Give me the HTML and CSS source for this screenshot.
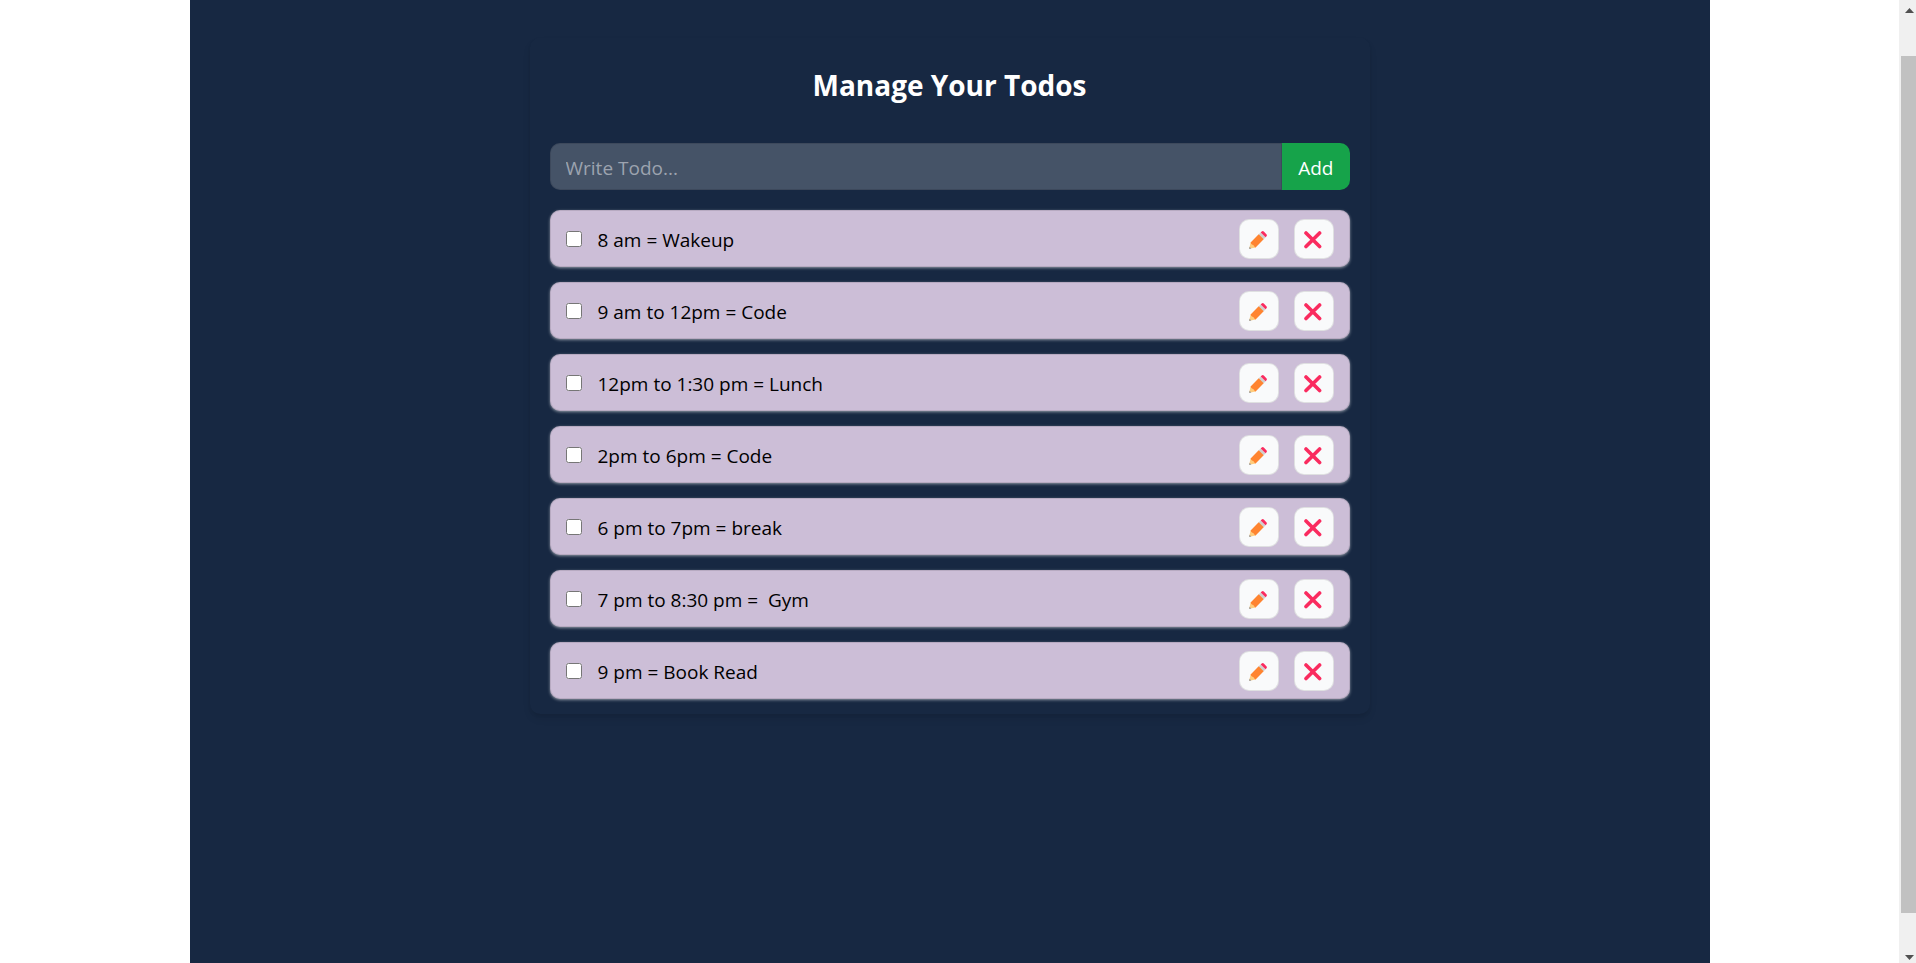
FILE: index.html
```html
<!DOCTYPE html>
<html lang="en">
<head>
<meta charset="utf-8">
<title>Manage Your Todos</title>
<link rel="stylesheet" href="styles.css">
</head>
<body>
<svg class="sprite" aria-hidden="true">
  <symbol id="pencil" viewBox="0 0 18 18">
    <path fill="#ffcc7c" d="M1.6 11.4 0.2 17.8 6.6 16.4 6 12Z"/>
    <path fill="#9b9b9b" d="M0.6 15.8 0.1 17.2Q0.1 17.9 0.8 17.9L2.3 17.4Z"/>
    <path fill="#ff8430" d="M1.6 11.4 9.7 3.3Q10.6 3 11.4 3.7L14.3 6.6Q15 7.4 14.7 8.3L6.6 16.4Q5.8 16.2 5.4 15.4 4.9 14.4 4 14 1.8 13.2 1.6 11.4Z"/>
    <path fill="#d0cfce" d="M9.7 3.3 11.7 1.4 16.6 6.3 14.7 8.3Z"/>
    <path fill="#fa2b5f" d="M11.7 1.4 12.7 0.5Q13.8 -0.3 14.8 0.6L17.4 3.2Q18.3 4.2 17.5 5.3L16.6 6.3Z"/>
  </symbol>
  <symbol id="cross" viewBox="0 0 18 18">
    <path fill="none" stroke="#fa2b5f" stroke-width="3.6" stroke-linecap="round" d="M2 2 15.6 15.6M15.6 2 2 15.6"/>
  </symbol>
</svg>
<div class="window">
  <main class="page">
    <section class="card">
      <h1 class="title">Manage Your Todos</h1>
      <form class="todo-form">
        <input class="todo-input" type="text" placeholder="Write Todo..." aria-label="Write Todo">
        <button class="add" type="button">Add</button>
      </form>
      <ul class="list">
        <li class="item"><input class="check" type="checkbox" id="t1"><label class="text" for="t1">8 am = Wakeup</label><button class="icon-btn" type="button" aria-label="Edit"><svg class="icon"><use href="#pencil"/></svg></button><button class="icon-btn" type="button" aria-label="Delete"><svg class="icon"><use href="#cross"/></svg></button></li>
        <li class="item"><input class="check" type="checkbox" id="t2"><label class="text" for="t2">9 am to 12pm = Code</label><button class="icon-btn" type="button" aria-label="Edit"><svg class="icon"><use href="#pencil"/></svg></button><button class="icon-btn" type="button" aria-label="Delete"><svg class="icon"><use href="#cross"/></svg></button></li>
        <li class="item"><input class="check" type="checkbox" id="t3"><label class="text" for="t3">12pm to 1:30 pm = Lunch</label><button class="icon-btn" type="button" aria-label="Edit"><svg class="icon"><use href="#pencil"/></svg></button><button class="icon-btn" type="button" aria-label="Delete"><svg class="icon"><use href="#cross"/></svg></button></li>
        <li class="item"><input class="check" type="checkbox" id="t4"><label class="text" for="t4">2pm to 6pm = Code</label><button class="icon-btn" type="button" aria-label="Edit"><svg class="icon"><use href="#pencil"/></svg></button><button class="icon-btn" type="button" aria-label="Delete"><svg class="icon"><use href="#cross"/></svg></button></li>
        <li class="item"><input class="check" type="checkbox" id="t5"><label class="text" for="t5">6 pm to 7pm = break</label><button class="icon-btn" type="button" aria-label="Edit"><svg class="icon"><use href="#pencil"/></svg></button><button class="icon-btn" type="button" aria-label="Delete"><svg class="icon"><use href="#cross"/></svg></button></li>
        <li class="item"><input class="check" type="checkbox" id="t6"><label class="text" for="t6">7 pm to 8:30 pm =&nbsp; Gym</label><button class="icon-btn" type="button" aria-label="Edit"><svg class="icon"><use href="#pencil"/></svg></button><button class="icon-btn" type="button" aria-label="Delete"><svg class="icon"><use href="#cross"/></svg></button></li>
        <li class="item"><input class="check" type="checkbox" id="t7"><label class="text" for="t7">9 pm = Book Read</label><button class="icon-btn" type="button" aria-label="Edit"><svg class="icon"><use href="#pencil"/></svg></button><button class="icon-btn" type="button" aria-label="Delete"><svg class="icon"><use href="#cross"/></svg></button></li>
      </ul>
    </section>
  </main>
  <div class="scrollbar" aria-hidden="true">
    <svg class="arrow" viewBox="0 0 17 21"><path fill="#505050" d="M10.5 8 15 13H6Z"/></svg>
    <div class="track-before"></div>
    <div class="thumb"></div>
    <div class="track-after"></div>
    <svg class="arrow" viewBox="0 0 17 21"><path fill="#505050" d="M6 13H15L10.5 18Z"/></svg>
  </div>
</div>
</body>
</html>
```

FILE: styles.css
```css
* { box-sizing: border-box; }

body {
  margin: 0;
  background: #fff;
  color: #000;
  font: 19px/30px "Segoe UI", "Open Sans", "Noto Sans", sans-serif;
}

.sprite { display: none; }

.window {
  display: flex;
  min-height: 100vh;
}

.page {
  width: 100%;
  max-width: 1520px;
  margin: 0 auto;
  padding: 38px 20px;
  background: #172842;
}

.card {
  max-width: 840px;
  margin: 0 auto;
  padding: 15px 20px;
  border-radius: 10px;
  color: #fff;
  box-shadow: 0 5px 8px -1px rgba(0, 0, 0, .1), 0 2px 5px -2px rgba(0, 0, 0, .1);
}

.title {
  margin: 12px 0 38px;
  font-size: 28px;
  line-height: 40px;
  font-weight: 700;
  text-align: center;
}

.todo-form {
  display: flex;
  margin-bottom: 20px;
}

.todo-input {
  flex: 1;
  min-width: 0;
  height: 47px;
  padding: 2px 15px 0;
  border: 1px solid rgba(0, 0, 0, .1);
  border-radius: 10px 0 0 10px;
  background: rgba(255, 255, 255, .2);
  color: #fff;
  font: inherit;
}

.todo-input::placeholder { color: #9ca3af; }

.add {
  padding: 2px 16px 0;
  border: 0;
  border-radius: 0 10px 10px 0;
  background: #16a34a;
  color: #fff;
  font: inherit;
}

.list {
  display: grid;
  gap: 15px;
  margin: 0;
  padding: 0;
  list-style: none;
}

.item {
  display: flex;
  align-items: center;
  gap: 15px;
  padding: 8px 15px 7px;
  border: 1px solid rgba(0, 0, 0, .1);
  border-radius: 10px;
  background: #ccbed7;
  color: #000;
  box-shadow: 0 1px 3px rgba(255, 255, 255, .5);
}

.check {
  width: 16px;
  height: 16px;
  margin: 0;
}

.text {
  flex: 1;
  padding: 2px 0 0 1px;
}

.icon-btn {
  display: grid;
  place-items: center;
  width: 40px;
  height: 40px;
  padding: 2px 2px 0 0;
  border: 1px solid rgba(0, 0, 0, .1);
  border-radius: 10px;
  background: #f9fafb;
}

.icon {
  width: 18px;
  height: 18px;
}

.scrollbar {
  display: flex;
  flex: 0 0 17px;
  flex-direction: column;
  background: #f0f0f0;
}

.arrow {
  width: 17px;
  height: 21px;
}

.track-before { flex: 35; }

.thumb {
  flex: 857;
  margin-left: 2px;
  background: #c1c1c1;
}

.track-after { flex: 29; }
```
